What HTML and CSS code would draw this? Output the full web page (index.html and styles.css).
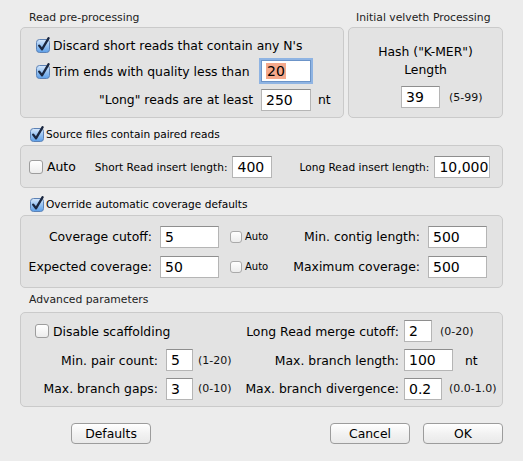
FILE: index.html
```html
<!DOCTYPE html>
<html>
<head>
<meta charset="utf-8">
<link rel="stylesheet" href="styles.css">
</head>
<body>
<svg width="0" height="0" class="defs">
  <defs>
    <linearGradient id="cbg" x1="0" y1="0" x2="0" y2="1">
      <stop offset="0" stop-color="#d8e9fc"/>
      <stop offset="0.5" stop-color="#96c2f1"/>
      <stop offset="1" stop-color="#5d9fe8"/>
    </linearGradient>
  </defs>
</svg>
<div class="dialog">
  <div class="top">
    <div class="group g-read">
      <div class="glabel">Read pre-processing</div>
      <div class="panel p-read">
        <div class="row r1">
          <svg class="cb" viewBox="0 0 16 16"><rect x="1.5" y="2.5" width="13" height="13" rx="3" fill="url(#cbg)" stroke="#5d82b5"/><path d="M4.2 8.6 L7 12.3 L13.6 1.2" fill="none" stroke="#1a2740" stroke-width="2.3" stroke-linecap="round" stroke-linejoin="round"/></svg>
          <span class="lg">Discard short reads that contain any N's</span>
        </div>
        <div class="rgrid">
          <div class="cell-left">
            <svg class="cb" viewBox="0 0 16 16"><rect x="1.5" y="2.5" width="13" height="13" rx="3" fill="url(#cbg)" stroke="#5d82b5"/><path d="M4.2 8.6 L7 12.3 L13.6 1.2" fill="none" stroke="#1a2740" stroke-width="2.3" stroke-linecap="round" stroke-linejoin="round"/></svg>
            <span class="lg">Trim ends with quality less than</span>
          </div>
          <div class="field focus w50"><span class="sel">20</span></div>
          <span></span>
          <div class="cell-right lg">"Long" reads are at least</div>
          <div class="field w50">250</div>
          <span class="lg nt">nt</span>
        </div>
      </div>
    </div>
    <div class="group g-hash">
      <div class="glabel">Initial velveth Processing</div>
      <div class="panel p-hash">
        <div class="hash-title lg">Hash ("K-MER")<br>Length</div>
        <div class="hash-row">
          <div class="field w39">39</div>
          <span class="range">(5-99)</span>
        </div>
      </div>
    </div>
  </div>

  <div class="cbhead">
    <svg class="cb" viewBox="0 0 16 16"><rect x="1.5" y="2.5" width="13" height="13" rx="3" fill="url(#cbg)" stroke="#5d82b5"/><path d="M4.2 8.6 L7 12.3 L13.6 1.2" fill="none" stroke="#1a2740" stroke-width="2.3" stroke-linecap="round" stroke-linejoin="round"/></svg>
    <span class="sm">Source files contain paired reads</span>
  </div>
  <div class="panel p-paired">
    <span class="ucb"></span>
    <span class="lg auto">Auto</span>
    <span class="sm lbl-short">Short Read insert length:</span>
    <div class="field w40">400</div>
    <span class="sm lbl-long">Long Read insert length:</span>
    <div class="field w56">10,000</div>
  </div>

  <div class="cbhead">
    <svg class="cb" viewBox="0 0 16 16"><rect x="1.5" y="2.5" width="13" height="13" rx="3" fill="url(#cbg)" stroke="#5d82b5"/><path d="M4.2 8.6 L7 12.3 L13.6 1.2" fill="none" stroke="#1a2740" stroke-width="2.3" stroke-linecap="round" stroke-linejoin="round"/></svg>
    <span class="sm">Override automatic coverage defaults</span>
  </div>
  <div class="panel p-cov">
    <span class="lg rlab">Coverage cutoff:</span>
    <div class="field w59">5</div>
    <span class="autosm"><span class="ucb small"></span><span class="xs">Auto</span></span>
    <span class="lg rlab">Min. contig length:</span>
    <div class="field w59">500</div>

    <span class="lg rlab">Expected coverage:</span>
    <div class="field w59">50</div>
    <span class="autosm"><span class="ucb small"></span><span class="xs">Auto</span></span>
    <span class="lg rlab">Maximum coverage:</span>
    <div class="field w59">500</div>
  </div>

  <div class="glabel adv">Advanced parameters</div>
  <div class="panel p-adv">
    <div class="scaf"><span class="ucb"></span><span class="lg">Disable scaffolding</span></div>
    <span class="lg rlab2">Long Read merge cutoff:</span>
    <div class="fx"><div class="field w28">2</div><span class="range r8">(0-20)</span></div>

    <span class="lg rlab">Min. pair count:</span>
    <div class="field w27">5</div>
    <span class="range r5">(1-20)</span>
    <span class="lg rlab2">Max. branch length:</span>
    <div class="fx"><div class="field w49">100</div><span class="lg nt2">nt</span></div>

    <span class="lg rlab">Max. branch gaps:</span>
    <div class="field w27">3</div>
    <span class="range r5">(0-10)</span>
    <span class="lg rlab2">Max. branch divergence:</span>
    <div class="fx"><div class="field w38">0.2</div><span class="range r7">(0.0-1.0)</span></div>
  </div>

  <div class="buttons">
    <button class="btn b-def">Defaults</button>
    <span class="spacer"></span>
    <button class="btn">Cancel</button>
    <button class="btn">OK</button>
  </div>
</div>
</body>
</html>
```
FILE: styles.css
```css
html, body {
  margin: 0;
  background: #ececec;
}
body {
  font-family: "DejaVu Sans", "Noto Sans", sans-serif;
  color: #000;
}
.defs { position: absolute; }
.dialog {
  width: 483px;
  padding: 11px 0 0 20px;
}
.top {
  display: flex;
  gap: 4px;
}
.g-read { width: 324px; }
.g-hash { width: 155px; }
.glabel {
  font-size: 10.8px;
  height: 16px;
  line-height: 14px;
  padding-left: 9px;
  color: #222;
}
.g-hash .glabel { padding-left: 8px; }
.panel {
  box-sizing: border-box;
  background: #e3e3e3;
  border: 1px solid #cacaca;
  border-radius: 5px;
}
.lg { font-size: 12.4px; }
.sm { font-size: 10.6px; }
.xs { font-size: 10px; }
.range { font-size: 11px; color: #111; }

.cb { width: 16px; height: 16px; flex: none; }
.ucb {
  display: inline-block;
  box-sizing: border-box;
  width: 14px;
  height: 14px;
  border: 1px solid #9d9d9d;
  border-radius: 3px;
  background: linear-gradient(#ffffff, #ececec);
  flex: none;
}
.ucb.small { width: 12px; height: 12px; border-radius: 3px; border-color: #aaa; }

.field {
  box-sizing: border-box;
  height: 22px;
  background: #fff;
  border: 1px solid #b5b5b5;
  border-top-color: #8e8e8e;
  font-size: 14px;
  line-height: 20px;
  padding-left: 4px;
  white-space: nowrap;
}
.field.focus {
  border-color: #6c94c8;
  box-shadow: 0 0 0 2px #8fb4e3;
}
.sel { background: #f5a98c; padding: 0 1px; }
.w27 { width: 27px; }
.w28 { width: 28px; }
.w38 { width: 38px; }
.w39 { width: 39px; }
.w40 { width: 40px; }
.w49 { width: 49px; }
.w50 { width: 50px; }
.w56 { width: 56px; }
.w59 { width: 59px; }

/* read pre-processing */
.p-read {
  height: 91px;
  padding: 4px 0 0 14px;
}
.row { display: flex; align-items: center; gap: 2px; }
.r1 { height: 26px; }
.rgrid {
  display: grid;
  grid-template-columns: 226px 50px auto;
  grid-template-rows: 26px 31px;
  align-items: center;
}
.cell-left { display: flex; align-items: center; gap: 2px; }
.cell-right { text-align: right; padding-right: 8px; }
.nt { padding-left: 7px; }

/* hash */
.p-hash {
  height: 91px;
  padding-top: 15px;
}
.hash-title {
  text-align: center;
  line-height: 18px;
}
.hash-row {
  display: flex;
  align-items: center;
  padding: 7px 0 0 52px;
  gap: 9px;
}

/* check header rows */
.cbhead {
  box-sizing: border-box;
  height: 27px;
  padding-top: 4px;
  display: flex;
  align-items: center;
  padding-left: 9px;
  gap: 1px;
}

.p-paired {
  height: 43px;
  display: flex;
  align-items: center;
  padding-left: 8px;
}
.auto { margin-left: 4px; }
.lbl-short { margin-left: 19px; margin-right: 5px; }
.lbl-long { margin-left: 27px; margin-right: 5px; }

.p-cov {
  height: 73px;
  display: grid;
  grid-template-columns: 139px 59px 72px 137px 59px;
  grid-template-rows: 30px 30px;
  align-content: center;
  align-items: center;
}
.rlab { text-align: right; padding-right: 8px; white-space: nowrap; }
.autosm { display: flex; align-items: center; gap: 3px; padding-left: 11px; }

.glabel.adv { height: 24px; line-height: 24px; }
.p-adv {
  height: 95px;
  display: grid;
  grid-template-columns: 145px 27px 45px 166px auto;
  grid-template-rows: 29px 29px 28px;
  align-content: center;
  align-items: center;
}
.scaf {
  grid-column: 1 / 4;
  display: flex;
  align-items: center;
  gap: 4px;
  padding-left: 14px;
}
.rlab2 { text-align: right; padding-right: 5px; white-space: nowrap; }
.fx { display: flex; align-items: center; }
.r8 { margin-left: 8px; }
.r5 { margin-left: 5px; }
.r7 { margin-left: 7px; }
.nt2 { margin-left: 12px; }

.buttons {
  display: flex;
  margin-top: 16px;
  gap: 13px;
  width: 483px;
}
.spacer { flex: 1; }
.btn {
  font-family: inherit;
  font-size: 12.4px;
  width: 80px;
  height: 21px;
  padding: 0;
  border: 1px solid #9c9c9c;
  border-radius: 4px;
  background: linear-gradient(#ffffff, #f2f2f2 50%, #e9e9e9);
  color: #000;
}
.b-def { margin-left: 51px; }
```
